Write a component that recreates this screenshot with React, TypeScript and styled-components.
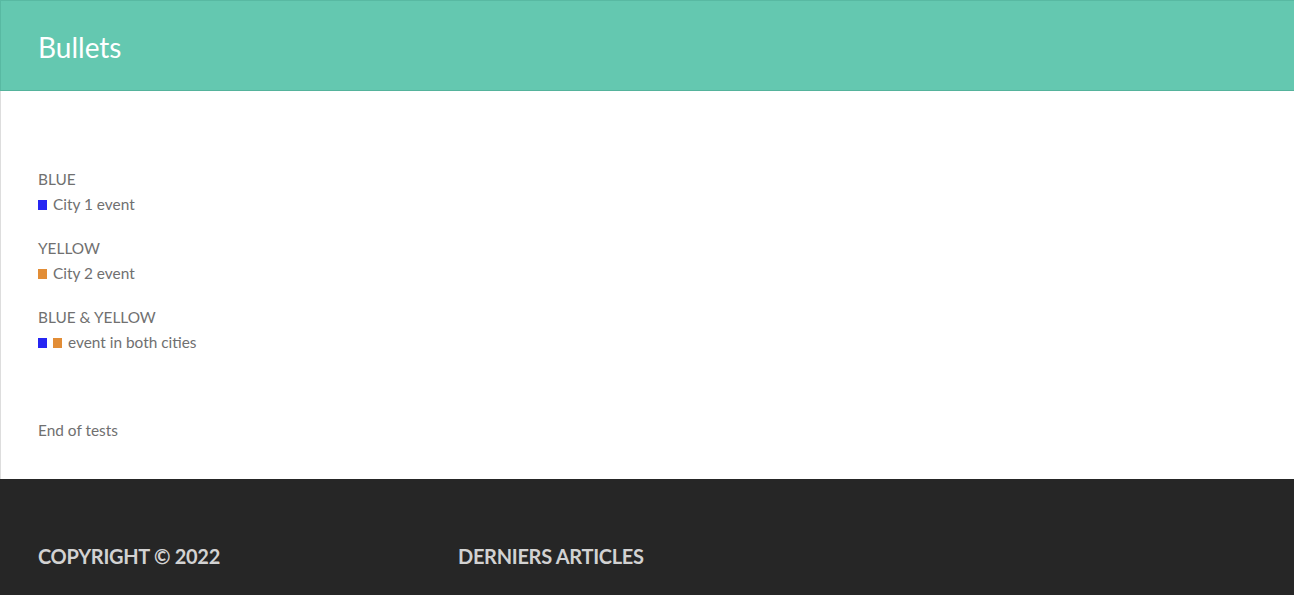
import React from 'react';
import styled, { createGlobalStyle } from 'styled-components';

const GlobalStyle = createGlobalStyle`
   html, body {
      margin: 0;
      padding: 0;
      background: #ffffff;
      font-family: Lato, 'Noto Sans', sans-serif;
   }
`;

const tests = [
   { label: 'BLUE', colors: ['blue'], text: 'City 1 event' },
   { label: 'YELLOW', colors: ['yellow'], text: 'City 2 event' },
   { label: 'BLUE & YELLOW', colors: ['blue', 'yellow'], text: 'event in both cities' },
];

function App() {
   return (
      <>
         <GlobalStyle />
         <Header>
            <Title>Bullets</Title>
         </Header>
         <Main>
            {tests.map((t) => (
               <Section key={t.label}>
                  <Label>{t.label}</Label>
                  <Item>
                     {t.colors.map((c) => (
                        <Bullet key={c} $color={c === 'blue' ? '#2626f2' : '#e28d36'} />
                     ))}
                     {t.text}
                  </Item>
               </Section>
            ))}
            <End>End of tests</End>
         </Main>
         <Footer>
            <FooterCol>
               <FooterTitle>COPYRIGHT © 2022</FooterTitle>
            </FooterCol>
            <FooterCol>
               <FooterTitle>DERNIERS ARTICLES</FooterTitle>
            </FooterCol>
         </Footer>
      </>
   );
}

export default App;

const Header = styled.header`
   box-sizing: border-box;
   height: 91px;
   background-color: #64c8b0;
   border-top: 1px solid #58b9a2;
   border-left: 1px solid #58b9a2;
   border-bottom: 1px solid #55b39c;
   padding: 0 37px;
   display: flex;
   align-items: center;
`;
const Title = styled.h1`
   margin: 0;
   padding-top: 3px;
   font-weight: normal;
   font-size: 28px;
   color: #ffffff;
`;
const Main = styled.main`
   border-left: 1px solid #dddddd;
   padding: 76px 37px 36px;
   color: #707070;
   font-size: 15.4px;
   line-height: 25px;
`;
const Section = styled.div`
   margin-bottom: 19px;
   &:last-of-type {
      margin-bottom: 63px;
   }
`;
const Label = styled.div``;
const Item = styled.div`
   display: flex;
   align-items: center;
`;
const Bullet = styled.span<{ $color: string }>`
   display: inline-block;
   width: 9px;
   height: 10px;
   background-color: ${(p) => p.$color};
   margin-right: 6px;
`;
const End = styled.p`
   margin: 0;
`;
const Footer = styled.footer`
   background-color: #262626;
   padding: 65px 38px 40px;
   display: flex;
`;
const FooterCol = styled.div`
   width: 420px;
`;
const FooterTitle = styled.h3`
   margin: 0;
   font-size: 20px;
   line-height: 24px;
   font-weight: bold;
   color: #d2d2d2;
   letter-spacing: -0.3px;
`;
